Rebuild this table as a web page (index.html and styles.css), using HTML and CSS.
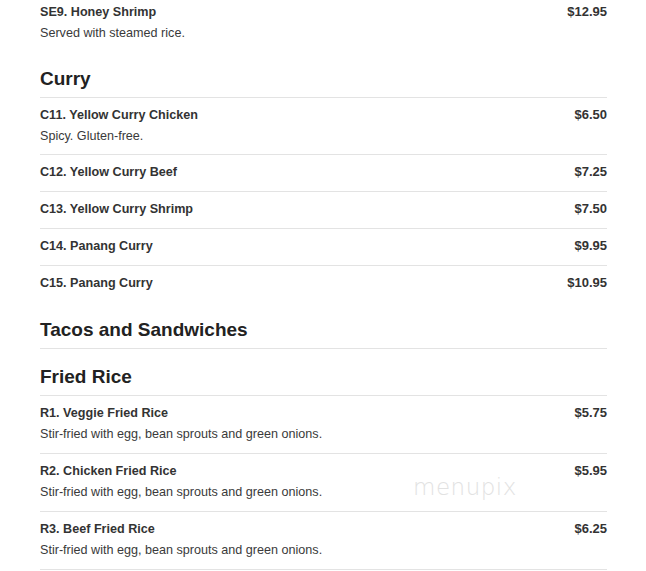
FILE: index.html
```html
<!DOCTYPE html>
<html>
<head>
<meta charset="utf-8">
<link rel="stylesheet" href="styles.css">
</head>
<body>
<div class="menu">
  <section class="section">
    <div class="item last">
      <div class="row"><span class="name">SE9. Honey Shrimp</span><span class="price">$12.95</span></div>
      <div class="desc">Served with steamed rice.</div>
    </div>
  </section>
  <section class="section">
    <h2 class="heading">Curry</h2>
    <div class="item">
      <div class="row"><span class="name">C11. Yellow Curry Chicken</span><span class="price">$6.50</span></div>
      <div class="desc">Spicy. Gluten-free.</div>
    </div>
    <div class="item">
      <div class="row"><span class="name">C12. Yellow Curry Beef</span><span class="price">$7.25</span></div>
    </div>
    <div class="item">
      <div class="row"><span class="name">C13. Yellow Curry Shrimp</span><span class="price">$7.50</span></div>
    </div>
    <div class="item">
      <div class="row"><span class="name">C14. Panang Curry</span><span class="price">$9.95</span></div>
    </div>
    <div class="item last">
      <div class="row"><span class="name">C15. Panang Curry</span><span class="price">$10.95</span></div>
    </div>
  </section>
  <section class="section">
    <h2 class="heading">Tacos and Sandwiches</h2>
  </section>
  <section class="section">
    <h2 class="heading">Fried Rice</h2>
    <div class="item tall">
      <div class="row"><span class="name">R1. Veggie Fried Rice</span><span class="price">$5.75</span></div>
      <div class="desc">Stir-fried with egg, bean sprouts and green onions.</div>
    </div>
    <div class="item tall">
      <div class="row"><span class="name">R2. Chicken Fried Rice</span><span class="price">$5.95</span></div>
      <div class="desc">Stir-fried with egg, bean sprouts and green onions.</div>
    </div>
    <div class="item tall">
      <div class="row"><span class="name">R3. Beef Fried Rice</span><span class="price">$6.25</span></div>
      <div class="desc">Stir-fried with egg, bean sprouts and green onions.</div>
    </div>
  </section>
</div>
<div class="watermark">menupix</div>
</body>
</html>
```
FILE: styles.css
```css
html, body {
  margin: 0;
  padding: 0;
  background: #fff;
}
body {
  font-family: "Liberation Sans", Arial, sans-serif;
  color: #333;
  position: relative;
  overflow: hidden;
  height: 571px;
}
.menu {
  margin: -5px 39px 0 40px;
}
.section + .section {
  margin-top: 16px;
}
.heading {
  margin: 0;
  font-size: 19px;
  line-height: 24px;
  font-weight: bold;
  color: #222;
  padding-bottom: 6px;
  border-bottom: 1px solid #e3e3e3;
}
.item {
  padding: 7px 0 9px;
  border-bottom: 1px solid #e3e3e3;
}
.item.tall {
  padding-bottom: 10px;
}
.item.last {
  border-bottom: none;
}
.row {
  display: flex;
  justify-content: space-between;
  align-items: baseline;
  line-height: 20px;
}
.name {
  font-size: 12.6px;
  font-weight: bold;
  color: #333;
}
.price {
  font-size: 13px;
  font-weight: bold;
  color: #333;
}
.desc {
  margin-top: 2px;
  font-size: 12.6px;
  line-height: 18px;
  color: #3a3a3a;
}
.watermark {
  position: absolute;
  left: 413px;
  top: 474px;
  font-family: "DejaVu Sans", sans-serif;
  font-weight: 200;
  font-size: 23px;
  letter-spacing: 0.5px;
  color: #e2e2e2;
}
```
